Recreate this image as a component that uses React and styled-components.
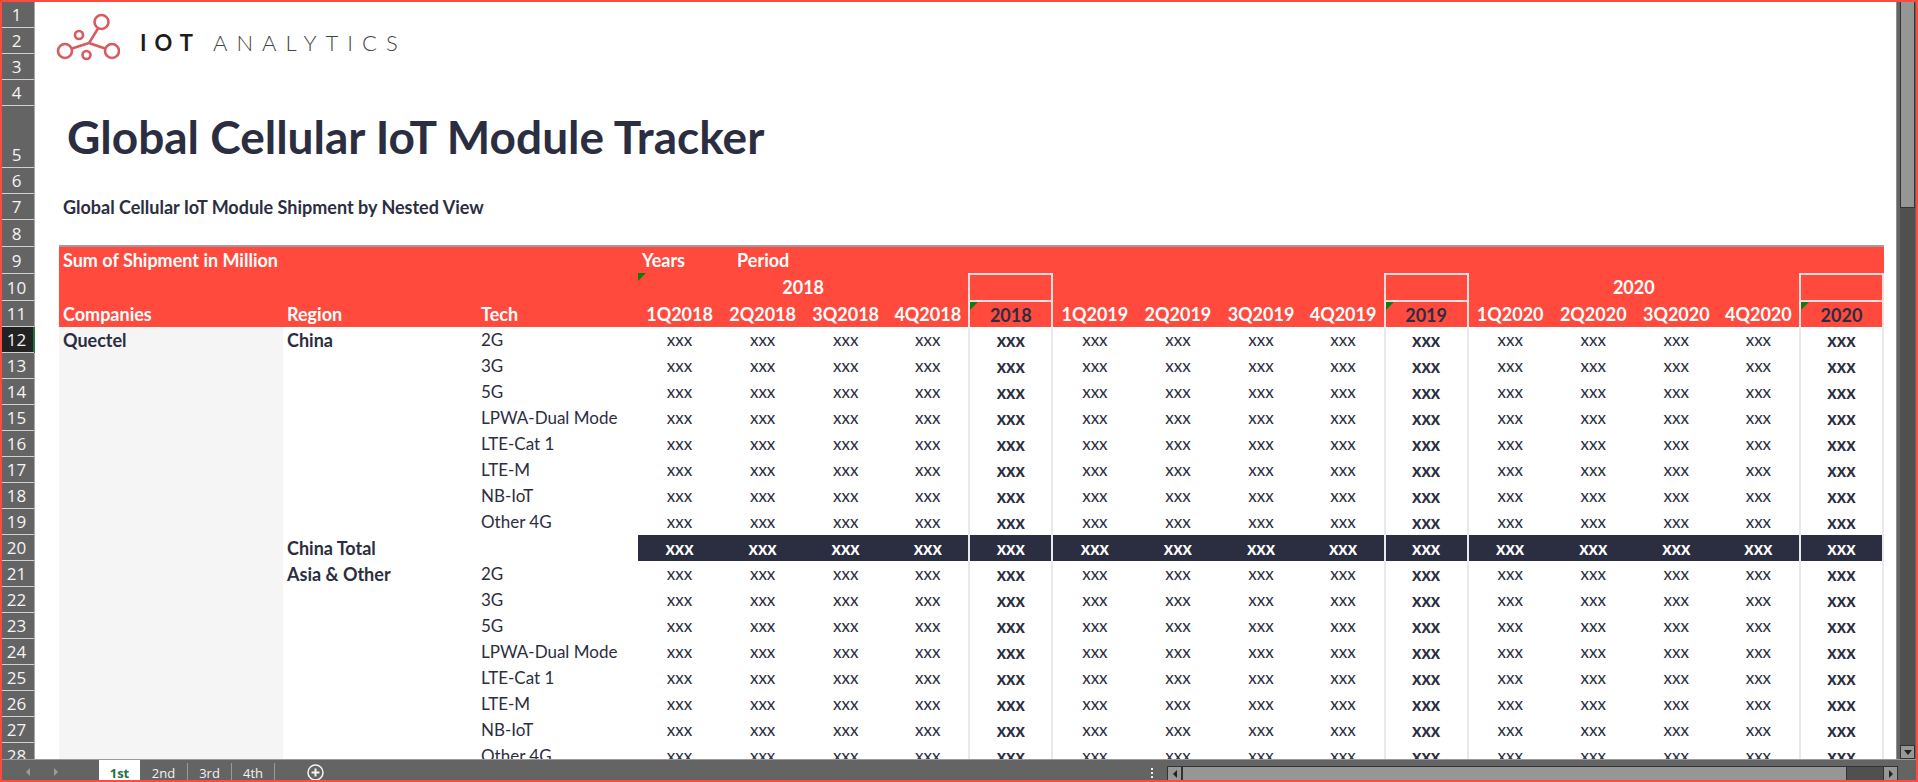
import React from "react";
import styled, { createGlobalStyle, css } from "styled-components";

const RED = "#ff4a3d";
const NAVY = "#2b2e41";
const BAR = "#646464";

const GlobalStyle = createGlobalStyle`
  *, *::before, *::after { box-sizing: border-box; }
  body { margin: 0; font-family: Lato, "Liberation Sans", sans-serif; color: ${NAVY}; }
`;

const Frame = styled.div`
  height: 100vh;
  display: flex;
  flex-direction: column;
  border: 2px solid ${RED};
  background: #fff;
  overflow: hidden;
`;

const Workspace = styled.div`
  flex: 1;
  min-height: 0;
  display: flex;
  overflow: hidden;
`;

const Gutter = styled.ol`
  flex: none;
  width: 33px;
  margin: 0;
  padding: 0;
  list-style: none;
  border-right: 1px solid #a6a6a6;
  background: ${BAR};
`;

const RowNumber = styled.li`
  height: ${(p) => p.$height}px;
  display: flex;
  align-items: flex-end;
  justify-content: center;
  padding-right: 3px;
  border-bottom: 1px solid #d0d0d0;
  color: #f4f4f4;
  font: 17px/24px "Open Sans", sans-serif;
  ${(p) => p.$active && css`
    background: #222;
    box-shadow: 1px 0 0 #217346, inset -1px 0 0 #217346;
  `}
`;

const Sheet = styled.main`
  flex: 1;
  min-width: 0;
  padding: 0 12px 0 24px;
`;

const LogoRow = styled.div`
  height: 104px;
  display: flex;
  align-items: flex-start;
  padding-top: 11px;
`;

const Mark = styled.svg`
  margin-left: -3px;
  width: 64px;
  height: 48px;
`;

const Wordmark = styled.span`
  display: flex;
  gap: 12px;
  margin-left: 20px;
  padding-top: 17px;
  font-size: 22px;
  line-height: 26px;
  letter-spacing: 8px;
`;

const Strong = styled.b`
  font-weight: 700;
  color: #1c1c1c;
`;

const Light = styled.span`
  font-weight: 300;
  letter-spacing: 9px;
  color: #444;
`;

const Title = styled.h1`
  height: 62px;
  margin: 0;
  padding-left: 8px;
  font-size: 46px;
  line-height: 62px;
  font-weight: 700;
`;

const Subtitle = styled.h2`
  height: 26px;
  margin: 26px 0 25px;
  padding-left: 4px;
  font-size: 18px;
  line-height: 26px;
  font-weight: 700;
`;

const Pivot = styled.table`
  width: 100%;
  table-layout: fixed;
  border-collapse: separate;
  border-spacing: 0;
  border-top: 2px solid #a8979b;
  font-size: 17px;
  line-height: 24px;
`;

const Col = styled.col`
  width: ${(p) => p.$width}px;
`;

const HeadRow = styled.tr`
  height: ${(p) => p.$height}px;
  background: ${RED};
  color: #fff;
  font-size: 18px;
`;

const HeadCell = styled.th`
  position: relative;
  padding: 0 ${(p) => (p.$align ? 0 : 4)}px;
  text-align: ${(p) => p.$align || "left"};
  font-weight: 700;
  white-space: nowrap;
  ${(p) => p.$ruled && css`border-right: 2px solid #fbdedb;`}
  ${(p) => p.$total && css`
    border-top: 2px solid #fbdedb;
    color: ${NAVY};
  `}
  ${(p) => p.$flag && css`
    &::before {
      content: "";
      position: absolute;
      left: 0;
      top: 0;
      border-top: 8px solid #107c10;
      border-right: 8px solid transparent;
    }
  `}
`;

const Period = styled.span`
  padding-left: 12px;
`;

const BodyRow = styled.tr`
  height: 26px;
`;

const Company = styled.th`
  padding: 1px 4px;
  background: #f5f5f5;
  text-align: left;
  vertical-align: top;
  font-size: 18px;
  font-weight: 700;
`;

const Label = styled.td`
  padding: 0 4px;
  font-size: ${(p) => (p.$bold ? 18 : 17)}px;
  font-weight: ${(p) => (p.$bold ? 700 : 400)};
  white-space: nowrap;
`;

const Value = styled.td`
  padding: 0;
  text-align: center;
  ${(p) => (p.$total || p.$dark) && css`font-size: 18px; font-weight: 700;`}
  ${(p) => p.$ruled && css`border-right: 2px solid #e9e9ec;`}
  ${(p) => p.$dark && css`background: ${NAVY}; color: #fff;`}
`;

const TabBar = styled.footer`
  flex: none;
  height: 21px;
  display: flex;
  border-top: 1px solid #9a9a9a;
  background: ${BAR};
  overflow: hidden;
`;

const NavButtons = styled.div`
  width: 97px;
  display: flex;
  align-items: center;
  padding: 4px 0 0 22px;
  gap: 20px;
`;

const PlainButton = styled.button`
  display: flex;
  padding: 0;
  border: 0;
  background: none;
  color: ${(p) => p.$color};
`;

const Tabs = styled.nav`
  display: flex;
`;

const Tab = styled.button`
  width: ${(p) => p.$width}px;
  height: 24px;
  padding: 2px 0 0;
  border: 0;
  background: ${(p) => (p.$active ? "#fff" : "none")};
  color: ${(p) => (p.$active ? "#217346" : "#f2f2f2")};
  font: ${(p) => (p.$active ? 700 : 400)} 13px/20px "Open Sans", sans-serif;
  ${(p) => !p.$active && css`
    border-right: 1px solid #9a9a9a;
    margin-top: 3px;
    padding: 0 0 6px;
  `}
`;

const AddButton = styled(PlainButton)`
  margin: 4px 0 0 32px;
  height: 17px;
`;

const Spacer = styled.div`
  flex: 1;
`;

const Grip = styled.div`
  display: flex;
  flex-direction: column;
  gap: 2px;
  margin: 8px 14px 0 0;
`;

const GripDot = styled.span`
  width: 2px;
  height: 2px;
  background: #f0f0f0;
`;

const HorizontalScroll = styled.div`
  width: 731px;
  max-width: 45%;
  height: 24px;
  margin: 6px 18px 0 0;
  display: flex;
  border: 1px solid #333;
  background: #505050;
`;

const ArrowButton = styled.button`
  flex: none;
  width: 13px;
  display: flex;
  align-items: flex-start;
  justify-content: center;
  padding: 3px 0 0;
  border: 0;
  background: #979797;
  color: #222;
`;

const Thumb = styled.div`
  flex: 1;
  margin-right: 36px;
  border: 1px solid #333;
  border-width: 0 1px 0 2px;
  background: #969696;
`;

const ScrollRightButton = styled(ArrowButton)`
  width: 14px;
  border-left: 1px solid #333;
`;

const VerticalScroll = styled.aside`
  flex: none;
  width: 20px;
  display: flex;
  flex-direction: column;
  padding: 0 1px 0 3px;
  border-left: 1px solid #8f8f8f;
  background: ${BAR};
`;

const VerticalThumb = styled.div`
  flex: 8;
  border: 1px solid #333;
  border-top: 0;
  background: #969696;
`;

const Track = styled.div`
  flex: 21;
  background: #505050;
`;

const DownButton = styled(ArrowButton)`
  width: 100%;
  height: 14px;
  padding: 2px 0 0;
  border: 1px solid #333;
`;

function Arrow({ d }) {
  return (
    <svg width="8" height="8" viewBox="0 0 8 8" aria-hidden="true">
      <path d={d} fill="currentColor" />
    </svg>
  );
}
const LEFT = "M6 0v8L2 4z";
const RIGHT = "M2 0v8l4-4z";
const DOWN = "M0 2h8L4 7z";

const rowHeights = [26, 26, 26, 26, 62, 26, 26, 27, 27, 27, ...Array(18).fill(26)];

const years = ["2018", "2019", "2020"];
const periods = years.flatMap((year) => [
  ...[1, 2, 3, 4].map((q) => ({ name: `${q}Q${year}`, ruled: q === 4 })),
  { name: year, total: true, ruled: true },
]);

const techs = ["2G", "3G", "5G", "LPWA-Dual Mode", "LTE-Cat 1", "LTE-M", "NB-IoT", "Other 4G"];
const rows = [
  ...techs.map((tech, i) => ({ region: i ? "" : "China", tech })),
  { region: "China Total", tech: "", dark: true },
  ...techs.map((tech, i) => ({ region: i ? "" : "Asia & Other", tech })),
];

function Logo() {
  return (
    <LogoRow>
      <Mark viewBox="0 0 64 48" role="img" aria-label="IoT Analytics logo" fill="none" stroke="#d95a5f" strokeWidth="2.6">
        <circle cx="45.500" cy="9" r="7" />
        <circle cx="23" cy="22" r="4" />
        <circle cx="9" cy="38" r="7" />
        <circle cx="30.500" cy="42" r="4" />
        <circle cx="56" cy="38" r="7" />
        <path d="M42 15.500 33 30 49 35.500M33 30 16 35.500" />
      </Mark>
      <Wordmark>
        <Strong>IOT</Strong>
        <Light>ANALYTICS</Light>
      </Wordmark>
    </LogoRow>
  );
}

function PivotTable() {
  return (
    <Pivot>
      <colgroup>
        <Col $width={224} />
        <Col $width={194} />
        <Col $width={161} />
        {periods.map((p) => <col key={p.name} />)}
      </colgroup>
      <thead>
        <HeadRow $height={26}>
          <HeadCell colSpan={3}>Sum of Shipment in Million</HeadCell>
          <HeadCell>Years</HeadCell>
          <HeadCell colSpan={14}>
            <Period>Period</Period>
          </HeadCell>
        </HeadRow>
        <HeadRow $height={27}>
          <HeadCell colSpan={3} />
          {years.map((year, y) => (
            <React.Fragment key={year}>
              <HeadCell colSpan={4} $align="center" $flag={y === 0} $ruled>
                {y === 1 ? "" : year}
              </HeadCell>
              <HeadCell $total $ruled />
            </React.Fragment>
          ))}
        </HeadRow>
        <HeadRow $height={27}>
          <HeadCell>Companies</HeadCell>
          <HeadCell>Region</HeadCell>
          <HeadCell>Tech</HeadCell>
          {periods.map((p) => (
            <HeadCell key={p.name} $align="center" $total={p.total} $flag={p.total} $ruled={p.ruled}>
              {p.name}
            </HeadCell>
          ))}
        </HeadRow>
      </thead>
      <tbody>
        {rows.map((row, i) => (
          <BodyRow key={i}>
            {i === 0 && <Company scope="rowgroup" rowSpan={rows.length}>Quectel</Company>}
            <Label $bold>{row.region}</Label>
            <Label>{row.tech}</Label>
            {periods.map((p) => (
              <Value key={p.name} $total={p.total} $ruled={p.ruled} $dark={row.dark}>xxx</Value>
            ))}
          </BodyRow>
        ))}
      </tbody>
    </Pivot>
  );
}

export default function App() {
  return (
    <Frame>
      <GlobalStyle />
      <Workspace>
        <Gutter>
          {rowHeights.map((height, i) => (
            <RowNumber key={i} $height={height} $active={i === 11}>{i + 1}</RowNumber>
          ))}
        </Gutter>
        <Sheet>
          <Logo />
          <Title>Global Cellular IoT Module Tracker</Title>
          <Subtitle>Global Cellular IoT Module Shipment by Nested View</Subtitle>
          <PivotTable />
        </Sheet>
        <VerticalScroll>
          <VerticalThumb />
          <Track />
          <DownButton aria-label="Scroll down"><Arrow d={DOWN} /></DownButton>
        </VerticalScroll>
      </Workspace>
      <TabBar>
        <NavButtons>
          <PlainButton aria-label="Previous sheet" $color="#9c9c9c"><Arrow d={LEFT} /></PlainButton>
          <PlainButton aria-label="Next sheet" $color="#9c9c9c"><Arrow d={RIGHT} /></PlainButton>
        </NavButtons>
        <Tabs>
          <Tab $active $width={41}>1st</Tab>
          <Tab $width={48}>2nd</Tab>
          <Tab $width={44}>3rd</Tab>
          <Tab $width={43}>4th</Tab>
        </Tabs>
        <AddButton aria-label="New sheet" $color="#f4f4f4">
          <svg width="17" height="17" viewBox="0 0 17 17" fill="none" stroke="currentColor" aria-hidden="true">
            <circle cx="8.500" cy="8.500" r="7.500" strokeWidth="1.500" />
            <path d="M8.500 4.500v8M4.500 8.500h8" strokeWidth="2" />
          </svg>
        </AddButton>
        <Spacer />
        <Grip>
          <GripDot />
          <GripDot />
          <GripDot />
        </Grip>
        <HorizontalScroll>
          <ArrowButton aria-label="Scroll left"><Arrow d={LEFT} /></ArrowButton>
          <Thumb />
          <ScrollRightButton aria-label="Scroll right"><Arrow d={RIGHT} /></ScrollRightButton>
        </HorizontalScroll>
      </TabBar>
    </Frame>
  );
}
